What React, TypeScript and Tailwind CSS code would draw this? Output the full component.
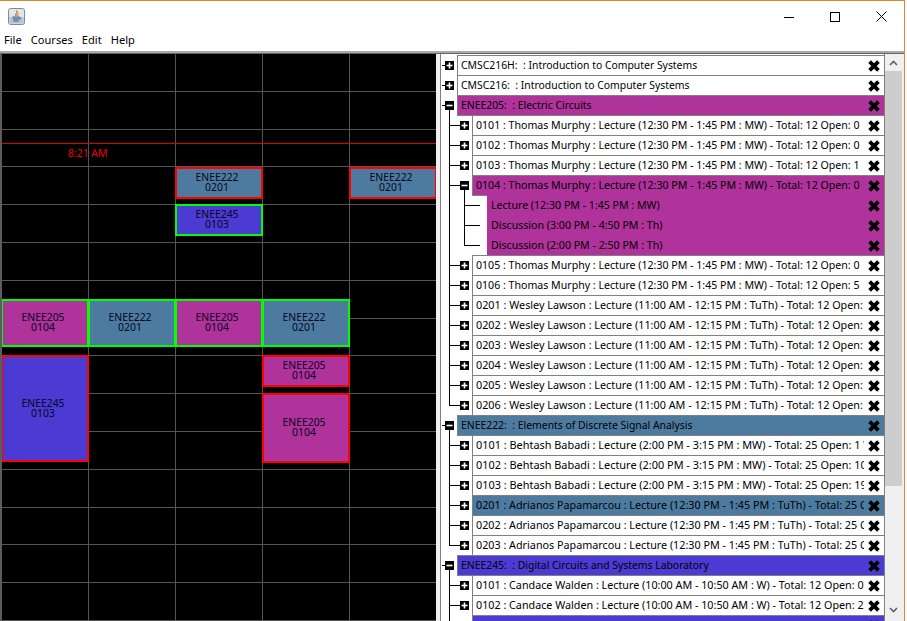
const PURPLE = "bg-[#b0329b]";
const STEEL = "bg-[#4d7ba0]";
const INDIGO = "bg-[#4b3bd2]";

const SIZE_TITLE = "text-[10.4px]";
const SIZE_MURPHY = "text-[10.6px]";
const SIZE_LAWSON = "text-[10.8px]";
const SIZE_BABADI = "text-[10.9px]";
const SIZE_PAPA = "text-[10.77px]";
const SIZE_WALDEN = "text-[10.75px]";

type Row = {
    level: 0 | 1 | 2;
    text: string;
    size: string;
    color?: string;
    open?: boolean;
    last?: boolean;
};

const lec205 = "Thomas Murphy : Lecture (12:30 PM - 1:45 PM : MW) - Total: 12 Open:";
const lec205b = "Wesley Lawson : Lecture (11:00 AM - 12:15 PM : TuTh) - Total: 12 Open: 0 Waitlist: 0";
const lec222 = "Behtash Babadi : Lecture (2:00 PM - 3:15 PM : MW) - Total: 25 Open:";
const lec222b = "Adrianos Papamarcou : Lecture (12:30 PM - 1:45 PM : TuTh) - Total: 25 Open: 0";
const lec245 = "Candace Walden : Lecture (10:00 AM - 10:50 AM : W) - Total: 12 Open:";

const rows: Row[] = [
    { level: 0, size: SIZE_TITLE, text: "CMSC216H:  : Introduction to Computer Systems" },
    { level: 0, size: SIZE_TITLE, text: "CMSC216:  : Introduction to Computer Systems" },
    { level: 0, size: SIZE_TITLE, text: "ENEE205:  : Electric Circuits", color: PURPLE, open: true },
    { level: 1, size: SIZE_MURPHY, text: `0101 : ${lec205} 0` },
    { level: 1, size: SIZE_MURPHY, text: `0102 : ${lec205} 0` },
    { level: 1, size: SIZE_MURPHY, text: `0103 : ${lec205} 1` },
    { level: 1, size: SIZE_MURPHY, text: `0104 : ${lec205} 0`, color: PURPLE, open: true },
    { level: 2, size: SIZE_MURPHY, text: "Lecture (12:30 PM - 1:45 PM : MW)", color: PURPLE },
    { level: 2, size: SIZE_MURPHY, text: "Discussion (3:00 PM - 4:50 PM : Th)", color: PURPLE },
    { level: 2, size: SIZE_MURPHY, text: "Discussion (2:00 PM - 2:50 PM : Th)", color: PURPLE, last: true },
    { level: 1, size: SIZE_MURPHY, text: `0105 : ${lec205} 0` },
    { level: 1, size: SIZE_MURPHY, text: `0106 : ${lec205} 5` },
    { level: 1, size: SIZE_LAWSON, text: `0201 : ${lec205b}` },
    { level: 1, size: SIZE_LAWSON, text: `0202 : ${lec205b}` },
    { level: 1, size: SIZE_LAWSON, text: `0203 : ${lec205b}` },
    { level: 1, size: SIZE_LAWSON, text: `0204 : ${lec205b}` },
    { level: 1, size: SIZE_LAWSON, text: `0205 : ${lec205b}` },
    { level: 1, size: SIZE_LAWSON, text: `0206 : ${lec205b}`, last: true },
    { level: 0, size: SIZE_TITLE, text: "ENEE222:  : Elements of Discrete Signal Analysis", color: STEEL, open: true },
    { level: 1, size: SIZE_BABADI, text: `0101 : ${lec222} 1 Waitlist` },
    { level: 1, size: SIZE_BABADI, text: `0102 : ${lec222} 10 Waitlist` },
    { level: 1, size: SIZE_BABADI, text: `0103 : ${lec222} 19 Waitlist` },
    { level: 1, size: SIZE_PAPA, text: `0201 : ${lec222b}`, color: STEEL },
    { level: 1, size: SIZE_PAPA, text: `0202 : ${lec222b}` },
    { level: 1, size: SIZE_PAPA, text: `0203 : ${lec222b}`, last: true },
    { level: 0, size: SIZE_TITLE, text: "ENEE245:  : Digital Circuits and Systems Laboratory", color: INDIGO, open: true },
    { level: 1, size: SIZE_WALDEN, text: `0101 : ${lec245} 0` },
    { level: 1, size: SIZE_WALDEN, text: `0102 : ${lec245} 2` },
    { level: 1, size: SIZE_WALDEN, text: `0103 : ${lec245} 1`, color: INDIGO },
];

function Expander({ x, open }: { x: number; open?: boolean }) {
    return (
        <g>
            <rect x={x} y={6} width={9} height={9} fill="#000" />
            <rect x={x + 1.5} y={9.7} width={6} height={1.6} fill="#fff" shapeRendering="geometricPrecision" />
            {!open && (
                <rect x={x + 3.7} y={7.5} width={1.6} height={6} fill="#fff" shapeRendering="geometricPrecision" />
            )}
        </g>
    );
}

function Gutter({ row }: { row: Row }) {
    const width = row.level === 0 ? 16 : row.level === 1 ? 31 : 46;
    return (
        <svg width={width} height={20} className="block shrink-0" shapeRendering="crispEdges">
            {row.level === 0 && (
                <>
                    <rect x={1} y={10} width={4} height={1} fill="#000" />
                    <Expander x={4} open={row.open} />
                    {row.open && <rect x={8} y={15} width={1} height={5} fill="#000" />}
                </>
            )}
            {row.level === 1 && (
                <>
                    <rect x={8} y={0} width={1} height={row.last ? 11 : 20} fill="#000" />
                    <rect x={8} y={10} width={11} height={1} fill="#000" />
                    <Expander x={19} open={row.open} />
                    {row.open && <rect x={23} y={15} width={1} height={5} fill="#000" />}
                </>
            )}
            {row.level === 2 && (
                <>
                    <rect x={8} y={0} width={1} height={20} fill="#000" />
                    <rect x={23} y={0} width={1} height={row.last ? 11 : 20} fill="#000" />
                    <rect x={23} y={10} width={16} height={1} fill="#000" />
                </>
            )}
        </svg>
    );
}

function RemoveIcon() {
    return (
        <svg width={12} height={12} viewBox="0 0 12 12">
            <path d="M1.6 1.6L10.4 10.4M10.4 1.6L1.6 10.4" stroke="#000" strokeWidth={3.8} fill="none" />
        </svg>
    );
}

function TreeRow({ row }: { row: Row }) {
    const border = row.level === 2 ? "border-[#b0329b]" : "border-[#808080]";
    return (
        <div className="flex h-5 shrink-0">
            <Gutter row={row} />
            <div className={`flex h-[21px] min-w-0 flex-1 border border-r-0 ${border} ${row.color ?? "bg-white"}`}>
                <div className={`min-w-0 flex-1 overflow-hidden whitespace-pre pl-[3px] leading-[18px] text-black ${row.size}`}>
                    {row.text}
                </div>
                <div className="flex w-5 shrink-0 items-center justify-center">
                    <RemoveIcon />
                </div>
            </div>
        </div>
    );
}

function Chevron({ up }: { up?: boolean }) {
    return (
        <svg width={9} height={6} viewBox="0 0 9 6">
            <path d={up ? "M1 5L4.5 1.5L8 5" : "M1 1L4.5 4.5L8 1"} stroke="#606060" strokeWidth={1.6} fill="none" />
        </svg>
    );
}

function JavaIcon() {
    return (
        <svg width={17} height={17} viewBox="0 0 17 17">
            <rect x={0.5} y={0.5} width={16} height={16} rx={2} fill="#dfe6ee" stroke="#7d8a99" />
            <rect x={1.5} y={9} width={14} height={6.5} fill="#b4c2d2" />
            <path d="M8.5 2.5C10.5 4.5 6.5 5.5 8 8C7 6 10.5 5.5 8.5 2.5Z" fill="#e8761e" stroke="#e8761e" />
            <path d="M10.5 5C11 6 9 6.5 9.5 8" stroke="#e8761e" fill="none" />
            <path d="M4.5 9H11M5 11H11M5.5 13H10.5" stroke="#3d5e85" strokeWidth={1} />
            <path d="M11 9.2C13 8.8 13 11 10.8 11.2" stroke="#3d5e85" fill="none" />
        </svg>
    );
}

function WindowButtons() {
    return (
        <div className="flex items-center pt-[10px] text-black">
            <div className="flex w-[46px] justify-center">
                <svg width={10} height={10} viewBox="0 0 10 10" shapeRendering="crispEdges">
                    <rect x={0} y={5} width={10} height={1} fill="#000" />
                </svg>
            </div>
            <div className="flex w-[46px] justify-center">
                <svg width={10} height={10} viewBox="0 0 10 10" shapeRendering="crispEdges">
                    <rect x={0.5} y={0.5} width={9} height={9} fill="none" stroke="#000" />
                </svg>
            </div>
            <div className="flex w-[46px] justify-center">
                <svg width={11} height={11} viewBox="0 0 11 11">
                    <path d="M0.5 0.5L10.5 10.5M10.5 0.5L0.5 10.5" stroke="#000" strokeWidth={1} fill="none" />
                </svg>
            </div>
        </div>
    );
}

function CalBlock({ course, section, className }: { course: string; section: string; className: string }) {
    return (
        <div
            className={`absolute flex w-[88px] items-center justify-center border-2 pr-1 pb-[2px] text-center text-[10.4px] leading-[10px] text-[#05051e] ${className}`}
        >
            <span>
                {course}
                <br />
                {section}
            </span>
        </div>
    );
}

export default function App() {
    return (
        <div
            className="flex h-[621px] w-[907px] overflow-hidden bg-white"
            style={{ fontFamily: '"Noto Sans", Tahoma, sans-serif' }}
        >
            <div className="flex w-[905px] shrink-0 flex-col border-t border-r border-[#d98a2b]">
                <div className="flex h-[29px] shrink-0 items-start justify-between bg-white">
                    <div className="pt-[7px] pl-2">
                        <JavaIcon />
                    </div>
                    <WindowButtons />
                </div>
                <div className="flex h-[21px] shrink-0 items-center gap-[9px] bg-white pl-1 text-[11.1px] text-black">
                    <span>File</span>
                    <span>Courses</span>
                    <span>Edit</span>
                    <span>Help</span>
                </div>
                <div className="h-[2px] shrink-0 bg-[#a9a9a9]" />
                <div className="flex min-h-0 flex-1 border-t border-[#666] bg-[#f0f0f0]">
                    <div className="relative h-full w-[436px] shrink-0 overflow-hidden border-l-2 border-[#5c5c5c] bg-black">
                        <div className="grid grid-cols-[repeat(5,87px)] grid-rows-[repeat(15,37.8px)]">
                            {Array.from({ length: 75 }, (_, i) => (
                                <div key={i} className="border-r border-b border-[#555]" />
                            ))}
                        </div>
                        <div className="absolute top-[89px] right-0 left-0 h-px bg-[#e00000]" />
                        <div className="absolute top-[91px] left-[66px] text-[10.4px] leading-4 text-[#f00000]">8:21 AM</div>

                        <CalBlock course="ENEE222" section="0201" className={`top-[113px] left-[173px] h-[32px] border-[#ff0000] ${STEEL}`} />
                        <CalBlock course="ENEE222" section="0201" className={`top-[113px] left-[347px] h-[32px] border-[#ff0000] ${STEEL}`} />
                        <CalBlock course="ENEE245" section="0103" className={`top-[150px] left-[173px] h-[32px] border-[#00ff00] ${INDIGO}`} />
                        <CalBlock course="ENEE205" section="0104" className={`top-[245px] left-[-1px] h-[48px] border-[#00ff00] ${PURPLE}`} />
                        <CalBlock course="ENEE222" section="0201" className={`top-[245px] left-[86px] h-[48px] border-[#00ff00] ${STEEL}`} />
                        <CalBlock course="ENEE205" section="0104" className={`top-[245px] left-[173px] h-[48px] border-[#00ff00] ${PURPLE}`} />
                        <CalBlock course="ENEE222" section="0201" className={`top-[245px] left-[260px] h-[48px] border-[#00ff00] ${STEEL}`} />
                        <CalBlock course="ENEE245" section="0103" className={`top-[301px] left-[-1px] h-[107px] border-[#ff0000] ${INDIGO}`} />
                        <CalBlock course="ENEE205" section="0104" className={`top-[301px] left-[260px] h-[32px] border-[#ff0000] ${PURPLE}`} />
                        <CalBlock course="ENEE205" section="0104" className={`top-[339px] left-[260px] h-[70px] border-[#ff0000] ${PURPLE}`} />
                    </div>
                    <div className="w-1 shrink-0" />
                    <div className="flex min-w-0 flex-1 border-l border-[#808080] bg-white">
                        <div className="flex min-w-0 flex-1 flex-col overflow-hidden pt-px">
                            {rows.map((row, i) => (
                                <TreeRow key={i} row={row} />
                            ))}
                        </div>
                        <div className="flex w-[18px] shrink-0 flex-col border-l border-[#808080] bg-[#f0f0f0]">
                            <div className="flex h-[17px] shrink-0 items-center justify-center pt-px">
                                <Chevron up />
                            </div>
                            <div className="h-[415px] shrink-0 bg-[#cdcdcd]" />
                            <div className="flex flex-1 items-end justify-center pb-2">
                                <Chevron />
                            </div>
                        </div>
                        <div className="w-[2px] shrink-0 bg-[#f0f0f0]" />
                    </div>
                </div>
            </div>
        </div>
    );
}
